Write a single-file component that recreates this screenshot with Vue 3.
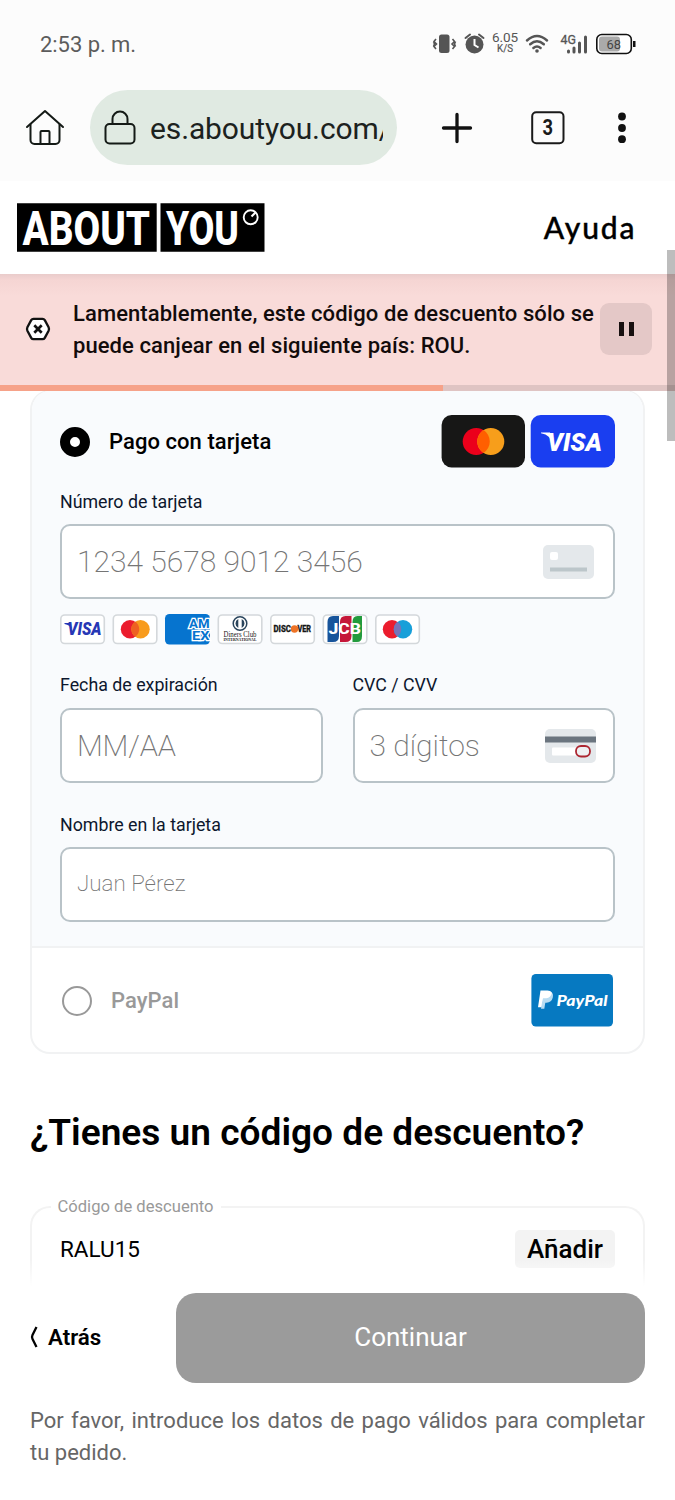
<script setup>
const discountCode = 'RALU15'
</script>

<template>
  <div class="screen">
    <div class="status">
      <span class="time">2:53 p. m.</span>
      <svg class="status-icons" width="210" height="32" viewBox="0 0 210 32">
        <g fill="#555">
          <rect x="12" y="6.500" width="10.500" height="18.500" rx="2.500" />
          <path d="M9 11 7 13.500 9.500 16 7 18.500 9 21M6.500 14 7.500 16 6.500 18.500M25.500 11l2 2.500-2.500 2.500 2.500 2.500-2 2.500M28.500 13.500 27.500 16l1 2.500" fill="none" stroke="#555" stroke-width="1.600" />
          <circle cx="47.500" cy="16.500" r="9" />
          <path d="M38.500 10 43 6.500M52 6.500l4.500 3.500" fill="none" stroke="#555" stroke-width="2" stroke-linecap="round" />
          <path d="M47.500 11v6l4 2.500" fill="none" stroke="#fff" stroke-width="2" />
          <text x="65" y="14" font-size="13.500" textLength="26">6.05</text>
          <text x="70" y="24.300" font-size="10" textLength="16" lengthAdjust="spacingAndGlyphs" stroke="#555" stroke-width=".2">K/S</text>
          <path d="M100 12.500q10-9 20 0M103.200 16.300q6.800-6 13.600 0M106.400 20q3.600-3 7.200 0" fill="none" stroke="#555" stroke-width="2.500" stroke-linecap="round" />
          <circle cx="110" cy="23" r="1.800" />
          <text x="133.500" y="16" font-size="13.500" textLength="15.500" lengthAdjust="spacingAndGlyphs" stroke="#555" stroke-width=".3">4G</text>
          <path d="M141.500 23v1M147 20v4M152.500 15v9M158.500 9v15" fill="none" stroke="#555" stroke-width="3" stroke-linecap="round" />
        </g>
        <rect x="169.800" y="6.500" width="34.500" height="19" rx="5" fill="#fff" stroke="#111" stroke-width="1.600" />
        <rect x="172" y="8.500" width="21" height="15" rx="3" fill="#aaa" />
        <rect x="206" y="13" width="2.500" height="6" fill="#111" />
        <text x="179.500" y="20.500" font-size="13.500" fill="#444" textLength="14.500" lengthAdjust="spacingAndGlyphs">68</text>
      </svg>
    </div>

    <div class="browser">
      <svg class="home" width="40" height="38" viewBox="0 0 40 38" fill="none" stroke="#141a16" stroke-width="2" stroke-linecap="round" stroke-linejoin="round">
        <path d="M2 18 20 2l18 16" />
        <path d="M5.500 15.500V31a4 4 0 0 0 4 4h21a4 4 0 0 0 4-4V15.500M15.500 34.500V23a1 1 0 0 1 1-1h7a1 1 0 0 1 1 1v11.500" />
      </svg>
      <div class="address">
        <svg width="32" height="36" viewBox="0 0 32 36" fill="none" stroke="#141a16" stroke-width="2">
          <rect x="1.500" y="14" width="29" height="19.500" rx="4" />
          <path d="M8.500 14V9a7.500 7.500 0 0 1 15 0v5" />
        </svg>
        <span class="url">es.aboutyou.com/</span>
      </div>
      <svg class="plus" width="32" height="32" viewBox="0 0 32 32"><path d="M16 2.500v27M2.500 16h27" stroke="#111" stroke-width="3.300" stroke-linecap="round" /></svg>
      <svg class="tabs" width="34" height="34" viewBox="0 0 34 34">
        <rect x="1.200" y="1.200" width="31.300" height="31" rx="4" fill="none" stroke="#1a1a1a" stroke-width="2" />
        <text x="11.500" y="24" font-size="22" font-weight="700" textLength="10.500" lengthAdjust="spacingAndGlyphs" fill="#1a1a1a">3</text>
      </svg>
      <svg class="dots" width="8" height="32" viewBox="0 0 8 32"><circle cx="4" cy="4.500" r="3.900" /><circle cx="4" cy="16" r="3.900" /><circle cx="4" cy="27.200" r="3.900" /></svg>
    </div>

    <header class="site">
      <svg width="248" height="49" viewBox="0 0 248 49">
        <path d="M0 .3h139.700v48.400H0zM143.500.3h104v48.400h-104z" />
        <g class="logo-text" font-size="48" fill="#fff">
          <text x="5.500" y="42" textLength="127.500" lengthAdjust="spacingAndGlyphs">ABOUT</text>
          <text x="149" y="42" textLength="73" lengthAdjust="spacingAndGlyphs">YOU</text>
        </g>
        <circle cx="233.700" cy="14.300" r="7" fill="none" stroke="#fff" stroke-width="1.900" />
        <path d="m234.500 13.500 4-4" stroke="#fff" stroke-width="2.200" />
      </svg>
      <span class="help">Ayuda</span>
    </header>

    <div class="alert">
      <svg width="26" height="24" viewBox="0 0 26 24">
        <path d="M8.500 1.800h9q1.500 0 2.300 1.300l3.800 7.200q.8 1.700 0 3.400l-3.800 7.200q-.8 1.300-2.300 1.300h-9q-1.500 0-2.300-1.300l-3.800-7.200q-.8-1.700 0-3.400l3.800-7.200Q7 1.800 8.500 1.800z" fill="#fff" stroke="#111" stroke-width="2.300" />
        <path d="m9.300 8.300 7.400 7.400m0-7.400-7.400 7.400" stroke="#111" stroke-width="2.700" />
      </svg>
      <p>Lamentablemente, este código de descuento sólo se<br>puede canjear en el siguiente país: ROU.</p>
      <button class="pause" aria-label="Pausa"><i></i><i></i></button>
      <div class="progress"><i></i></div>
    </div>

    <main>
      <section class="methods">
        <div class="card-form">
          <div class="method-head">
            <span class="radio on"></span>
            <b>Pago con tarjeta</b>
            <svg class="brands" width="174" height="53" viewBox="0 0 174 53">
              <rect x=".6" width="83.400" height="52.500" rx="10" fill="#171716" />
              <circle cx="35.200" cy="26.500" r="13.500" fill="#eb001b" />
              <circle cx="49.800" cy="26.500" r="13.500" fill="#f79e1b" />
              <path d="M42.500 15.100a13.500 13.500 0 0 1 0 22.800 13.500 13.500 0 0 1 0-22.800z" fill="#ff5f00" />
              <rect x="89.700" width="84.300" height="52.500" rx="10" fill="#1a3ef0" />
              <path d="M100 17.500h9l3 10-4-5.500q-3-3-8-3.800z" fill="#fff" />
              <text class="slant" x="106" y="35.500" font-size="25.500" fill="#fff" textLength="55" lengthAdjust="spacingAndGlyphs">VISA</text>
            </svg>
          </div>

          <label class="l-number">Número de tarjeta</label>
          <div class="field">
            <span class="number">1234 5678 9012 3456</span>
            <svg width="51" height="34" viewBox="0 0 51 34"><rect width="51" height="34" rx="5" fill="#e4e8eb" /><rect x="7" y="7" width="8" height="8" rx="2" fill="#fff" /><path d="M7 24.500h37" stroke="#bcc6ca" stroke-width="4" /></svg>
          </div>

          <svg class="schemes" width="362" height="31" viewBox="0 0 362 31">
            <g fill="#fff" stroke="#d4d8db" stroke-width="1.600">
              <rect x=".8" y="1" width="43.500" height="28.500" rx="4" />
              <rect x="53.300" y="1" width="43.500" height="28.500" rx="4" />
              <rect x="158.300" y="1" width="43.500" height="28.500" rx="4" />
              <rect x="210.800" y="1" width="43.500" height="28.500" rx="4" />
              <rect x="263.300" y="1" width="43.500" height="28.500" rx="4" />
              <rect x="315.800" y="1" width="43.500" height="28.500" rx="4" />
            </g>
            <path d="M4.500 9h5.500l2 6q-2-4-7.500-5z" fill="#2737b5" />
            <text class="slant" x="7.500" y="21.300" font-size="17.500" fill="#2737b5" textLength="34" lengthAdjust="spacingAndGlyphs">VISA</text>
            <circle cx="70" cy="15.200" r="9.200" fill="#eb1c2d" /><circle cx="80.500" cy="15.200" r="9.200" fill="#f89b1c" />
            <path d="M75.250 7.600a9.200 9.200 0 0 1 0 15.200 9.200 9.200 0 0 1 0-15.200z" fill="#ee6021" />
            <rect x="105" width="45" height="30.500" rx="4.500" fill="#0674cf" />
            <g class="amex" font-size="13" fill="#0674cf" stroke="#fff" stroke-width="2.600">
              <text x="129" y="14.300" textLength="20.500" lengthAdjust="spacingAndGlyphs">AM</text><text x="132" y="25.600" textLength="17.500" lengthAdjust="spacingAndGlyphs">EX</text>
            </g>
            <circle cx="180" cy="9.500" r="6.800" fill="#fff" stroke="#29445c" stroke-width="1.500" />
            <path d="M178.300 5a5 5 0 0 0 0 9zM181.700 5a5 5 0 0 1 0 9z" fill="#29445c" />
            <text class="diners" x="163.500" y="22.600" font-size="8" fill="#222" textLength="33" lengthAdjust="spacingAndGlyphs">Diners Club</text>
            <text class="diners" x="163.500" y="26.500" font-size="3.600" font-weight="700" fill="#222" textLength="33" lengthAdjust="spacingAndGlyphs">INTERNATIONAL</text>
            <circle cx="234.500" cy="15" r="3.700" fill="#ee7326" />
            <g class="discover" font-size="8.800" fill="#151515" stroke="#151515" stroke-width=".3">
              <text x="213.500" y="18.100" textLength="17.500" lengthAdjust="spacingAndGlyphs">DISC</text><text x="237.500" y="18.100" textLength="13.500" lengthAdjust="spacingAndGlyphs">VER</text>
            </g>
            <path d="M273 2h6v20q0 6-6 6h-5.500V8q0-6 5.500-6z" fill="#17549b" />
            <path d="M285.500 2h6v20q0 6-6 6H280V8q0-6 5.500-6z" fill="#c51638" />
            <path d="M297.500 2h4.500v20q0 6-5 6h-4.500V8q0-6 5-6z" fill="#239b3d" />
            <text class="jcb" x="268.500" y="20" font-size="14" fill="#fff" textLength="32.500" lengthAdjust="spacingAndGlyphs">JCB</text>
            <circle cx="332" cy="15.200" r="9.200" fill="#eb1c2d" /><circle cx="343" cy="15.200" r="9.200" fill="#179fd9" />
            <path d="M337.500 7.800a9.200 9.200 0 0 1 0 14.800 9.200 9.200 0 0 1 0-14.800z" fill="#7773b8" />
          </svg>

          <div class="pair">
            <div>
              <label class="l-expiry">Fecha de expiración</label>
              <div class="field"><span class="expiry">MM/AA</span></div>
            </div>
            <div>
              <label class="l-cvc">CVC / CVV</label>
              <div class="field cvc-field">
                <span class="cvc">3 dígitos</span>
                <svg width="51" height="34" viewBox="0 0 51 34"><rect width="51" height="34" rx="5" fill="#e4e8eb" /><path d="M0 10.500h51" stroke="#6b757f" stroke-width="6" /><rect x="7" y="18.500" width="30" height="8" rx="1" fill="#fff" /><rect x="31" y="17" width="14" height="10.500" rx="5" fill="#eef0f2" stroke="#ac2631" stroke-width="1.800" /></svg>
              </div>
            </div>
          </div>

          <label class="l-name">Nombre en la tarjeta</label>
          <div class="field"><span class="name">Juan Pérez</span></div>
        </div>

        <div class="paypal">
          <span class="radio"></span>
          <b>PayPal</b>
          <svg class="brands" width="82" height="53" viewBox="0 0 82 53">
            <rect x=".4" width="81.600" height="52.500" rx="4.500" fill="#0679c1" />
            <path d="M9.500 16.500h7q6 .5 4.800 6-1.300 5-7 5.200h-2.600l-1 5.500H7z" fill="#fff" />
            <path d="M21 19q1.500 1.500.8 4.500-1.200 5-6.300 5.200h-1.200l-1 6H10l1-6 1-4.500h3.500q4-.3 5.500-5.200z" fill="#b8dcf2" />
            <text class="pp" x="25.500" y="31.500" font-size="15.500" fill="#fff" textLength="51" lengthAdjust="spacingAndGlyphs">PayPal</text>
          </svg>
        </div>
      </section>

      <h1>¿Tienes un código de descuento?</h1>

      <fieldset class="coupon">
        <legend>Código de descuento</legend>
        <span class="code">{{ discountCode }}</span>
        <button class="add">Añadir</button>
      </fieldset>
    </main>

    <footer>
      <div class="fade"></div>
      <div class="actions">
        <a class="back">
          <svg width="9" height="22" viewBox="0 0 9 22" fill="none" stroke="#000" stroke-width="2.300"><path d="M6.500 1 2.500 9q-1 2 0 4l4 8" /></svg>
          Atrás
        </a>
        <button class="continue">Continuar</button>
      </div>
      <p>Por favor, introduce los datos de pago válidos para completar tu pedido.</p>
    </footer>
    <div class="scrollbar"></div>
  </div>
</template>

<style>
body { background: #fff; }
</style>

<style scoped>
* { box-sizing: border-box; }
.screen { position: relative; width: 675px; height: 1500px; overflow: hidden; background: #fff; color: #000; font-family: Roboto, sans-serif; }
svg { display: block; flex: none; }
p, h1 { margin: 0; }
button { border: 0; padding: 0; font-family: inherit; color: inherit; }
.status { height: 90px; background: #fcfcfc; display: flex; justify-content: space-between; padding: 28px 38px 0 40px; }
.time { font-size: 22px; line-height: 34px; color: #5c5c5c; letter-spacing: -.05px; white-space: nowrap; }
.browser { height: 91px; background: #fcfcfc; display: flex; align-items: flex-start; padding-left: 25px; }
.home { margin-top: 19px; }
.address { width: 307px; height: 75px; margin-left: 25px; border-radius: 38px; background: #e0eae2; display: flex; align-items: center; padding-left: 14px; }
.url { width: 232.500px; overflow: hidden; white-space: nowrap; margin-left: 14px; font-size: 30px; line-height: 44px; color: #1c221e; padding-top: 3px; letter-spacing: -.13px; }
.plus { margin: 21.500px 0 0 44px; }
.tabs { margin: 20.500px 0 0 58px; }
.dots { margin: 21.500px 0 0 53px; fill: #111; }
.site { height: 93px; display: flex; justify-content: space-between; align-items: flex-start; padding: 22px 38.500px 0 17px; }
.logo-text, .slant, .jcb, .amex, .discover { font-family: Roboto, sans-serif; font-weight: 800; }
.slant { font-style: italic; font-weight: 900; }
.amex { font-weight: 700; paint-order: stroke; }
.diners { font-family: "Liberation Serif", serif; }
.pp { font-family: Lato, sans-serif; font-style: italic; font-weight: 900; }
.help { font: 500 30px/48px Lato, sans-serif; letter-spacing: 1.900px; -webkit-text-stroke: .4px #000; }
.alert { position: relative; z-index: 1; height: 117px; display: flex; align-items: flex-start; background: linear-gradient(#e9cccb, #f5d5d3 6px, #f9dbd9 22px); padding: 24px 23px 0 25px; }
.alert > svg { margin: 19px 22px 0 0; }
.alert p { width: 528px; white-space: nowrap; font-size: 22px; font-weight: 500; line-height: 32px; color: #120b0b; letter-spacing: .08px; }
.pause { width: 52px; height: 52px; margin-top: 5px; margin-left: -1px; flex: none; border-radius: 9px; background: #e4c8c7; display: flex; align-items: center; justify-content: center; gap: 5px; }
.pause i { width: 5px; height: 14px; background: #171010; }
.progress { position: absolute; left: 0; right: 0; bottom: 0; height: 6px; background: #dfc4c3; }
.progress i { display: block; width: 443px; height: 6px; background: #f6a289; }
main { padding: 0 30px; }
.methods { height: 664px; margin-top: -1px; border: 2px solid #f1f2f3; border-top-width: 1px; border-radius: 20px; overflow: hidden; }
.card-form { height: 557px; background: #f9fbfd; border-bottom: 2px solid #f1f2f3; padding: 24px 28px 0; }
.method-head { display: flex; align-items: center; height: 53px; }
.method-head b, .paypal b { font-size: 22px; font-weight: 500; margin-left: 19px; letter-spacing: .06px; }
.radio { width: 30px; height: 30px; border: 2px solid #999; border-radius: 50%; }
.radio.on { border: 10px solid #000; background: #fff; }
.brands { margin-left: auto; }
label { display: block; height: 24px; font-size: 17.800px; line-height: 24px; color: #0d172d; white-space: nowrap; }
.l-number { margin: 22px 0 10px; }
.field { height: 75px; border: 2px solid #b9c3c8; border-radius: 10px; background: #fff; display: flex; align-items: center; justify-content: space-between; padding: 0 19px 0 15px; color: #757575; white-space: nowrap; }
.number, .expiry, .cvc { font-size: 30px; font-weight: 200; }
.expiry { letter-spacing: -.2px; }
.cvc-field { padding-right: 17px; }
.name { font-size: 22.400px; font-weight: 200; line-height: 30px; margin-top: -2px; }
.schemes { margin-top: 15px; }
.pair { display: grid; grid-template-columns: 262.500px 262.500px; gap: 30px; margin: 28px 0 29.500px; }
.pair label { margin-bottom: 11px; }
.l-name { margin-bottom: 10px; }
.paypal { height: 105px; display: flex; align-items: center; padding: 0 30px; }
.paypal b { color: #999; }
h1 { margin-top: 54px; font-size: 37.100px; line-height: 50px; font-weight: 600; white-space: nowrap; }
.coupon { height: 90px; margin: 39px 0 0; padding: 0 28px; border: 2px solid #f3f3f3; border-bottom: 0; border-radius: 20px 20px 0 0; display: flex; justify-content: space-between; align-items: flex-start; min-width: 0; }
legend { margin-left: -9.500px; padding: 0 7px; font-size: 16.600px; line-height: 20px; color: #999; }
.code { margin-top: 17px; font-size: 22.500px; line-height: 30px; }
.add { width: 100px; height: 38px; margin-top: 13px; background: #f3f3f3; border-radius: 5px; font-size: 26px; font-weight: 500; line-height: 38px; }
footer { padding: 0 30px; position: relative; margin-top: 6px; }
.fade { position: absolute; left: 0; right: 0; top: -33px; height: 33px; background: linear-gradient(rgba(255, 255, 255, 0), #fff 80%); pointer-events: none; }
.actions { display: flex; justify-content: space-between; align-items: center; position: relative; }
.back { display: flex; align-items: center; gap: 9px; font-size: 22.300px; line-height: 30px; font-weight: 600; padding-bottom: 2px; }
.continue { width: 469px; height: 90px; border-radius: 20px; background: #9b9b9b; color: #fff; font-size: 26px; padding-bottom: 2px; }
footer p { margin-top: 22px; font-size: 22px; line-height: 32px; color: #666; text-align: justify; }
.scrollbar { position: absolute; right: 0; top: 250px; width: 8px; height: 191px; z-index: 2; background: rgba(0, 0, 0, .26); }
</style>
